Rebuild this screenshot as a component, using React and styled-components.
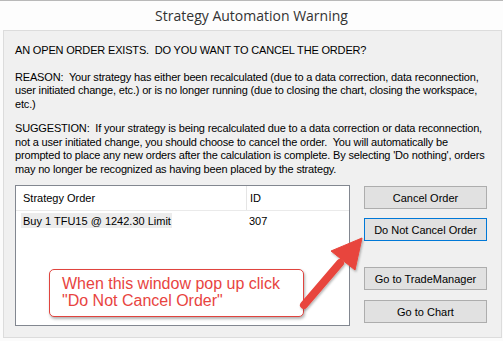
import React from "react";
import styled, { createGlobalStyle } from "styled-components";

const Global = createGlobalStyle`
  html, body { margin: 0; padding: 0; background: #ffffff; }
  body { width: 503px; height: 341px; overflow: hidden; }
  #root { position: relative; width: 503px; height: 341px; }
`;

const Window = styled.div`
  position: relative;
  width: 503px;
  height: 341px;
  box-sizing: border-box;
  border-top: 1px solid #b9b9b9;
  background: #fbfbfb;
  display: flex;
  flex-direction: column;
`;

const TitleBar = styled.div`
  height: 29px;
  display: flex;
  align-items: center;
  justify-content: center;
  font-family: "Open Sans", "Noto Sans", sans-serif;
  font-size: 14px;
  color: #333333;
  background: #fdfdfd;
`;

const Panel = styled.div`
  margin: 0 1px 3px 3px;
  flex: 1;
  background: #f0f0f0;
  border: 1px solid #dcdcdc;
  padding: 13px 13px 11px 11px;
  display: flex;
  flex-direction: column;
  font-family: "Liberation Sans", Arial, sans-serif;
  font-size: 11px;
  letter-spacing: -0.17px;
  color: #000;
`;

const Para = styled.div`
  margin: 0 0 ${(p) => p.$gap || 0}px 0;
  line-height: 13.5px;
`;

const Line = styled.div`
  white-space: pre;
`;

const Bottom = styled.div`
  display: grid;
  grid-template-columns: 335px 123px;
  column-gap: 14px;
  margin-top: auto;
  letter-spacing: 0;
`;

const List = styled.div`
  height: 141px;
  box-sizing: border-box;
  background: #ffffff;
  border: 1px solid #828790;
  display: flex;
  flex-direction: column;
`;

const HeaderRow = styled.div`
  display: grid;
  grid-template-columns: 231px 1fr;
  height: 24px;
  border-bottom: 1px solid #eaeaea;
`;

const HeaderCell = styled.div`
  display: flex;
  align-items: center;
  padding-left: ${(p) => p.$pad}px;
  border-right: ${(p) => (p.$divider ? "1px solid #e5e5e5" : "none")};
`;

const DataRow = styled.div`
  display: grid;
  grid-template-columns: 231px 1fr;
  margin-top: 2px;
  height: 15px;
`;

const DataCell = styled.div`
  display: flex;
  align-items: center;
`;

const Selected = styled.span`
  display: inline-flex;
  align-items: center;
  white-space: nowrap;
  box-sizing: border-box;
  height: 15px;
  margin-left: 5px;
  padding: 0 2px;
  width: 151px;
  background: #ececec;
`;

const IdText = styled.span`
  padding-left: 2px;
`;

const Buttons = styled.div`
  display: flex;
  flex-direction: column;
  padding-top: 1px;
`;

const Button = styled.button`
  width: 123px;
  height: 23px;
  margin-top: ${(p) => p.$mt || 0}px;
  box-sizing: border-box;
  background: #e1e1e1;
  border: 1px solid ${(p) => (p.$focus ? "#0078d7" : "#adadad")};
  font-family: "Liberation Sans", Arial, sans-serif;
  font-size: 11px;
  color: #000;
  padding: 0;
  display: flex;
  align-items: center;
  justify-content: center;
`;

const Callout = styled.div`
  position: absolute;
  left: 49px;
  top: 268px;
  width: 255px;
  height: 48px;
  box-sizing: border-box;
  background: #ffffff;
  border: 1.5px solid #e0443e;
  border-radius: 5px;
  box-shadow: 1px 2px 3px rgba(0, 0, 0, 0.3);
  padding: 5px 0 0 12px;
  font-family: "Liberation Sans", Arial, sans-serif;
  font-size: 16px;
  line-height: 17px;
  color: #e8443f;
`;

const Overlay = styled.svg`
  position: absolute;
  left: 0;
  top: 0;
  pointer-events: none;
`;

const reason = [
  "REASON:  Your strategy has either been recalculated (due to a data correction, data reconnection,",
  "user initiated change, etc.) or is no longer running (due to closing the chart, closing the workspace,",
  "etc.)",
];

const suggestion = [
  "SUGGESTION:  If your strategy is being recalculated due to a data correction or data reconnection,",
  "not a user initiated change, you should choose to cancel the order.  You will automatically be",
  "prompted to place any new orders after the calculation is complete. By selecting 'Do nothing', orders",
  "may no longer be recognized as having been placed by the strategy.",
];

export default function App() {
  return (
    <>
      <Global />
      <Window>
        <TitleBar>Strategy Automation Warning</TitleBar>
        <Panel>
          <Para $gap={13}>
            <Line>AN OPEN ORDER EXISTS.  DO YOU WANT TO CANCEL THE ORDER?</Line>
          </Para>
          <Para $gap={11}>
            {reason.map((l, i) => (
              <Line key={i}>{l}</Line>
            ))}
          </Para>
          <Para>
            {suggestion.map((l, i) => (
              <Line key={i}>{l}</Line>
            ))}
          </Para>
          <Bottom>
            <List>
              <HeaderRow>
                <HeaderCell $pad={7} $divider>Strategy Order</HeaderCell>
                <HeaderCell $pad={3}>ID</HeaderCell>
              </HeaderRow>
              <DataRow>
                <DataCell>
                  <Selected>Buy 1 TFU15 @ 1242.30 Limit</Selected>
                </DataCell>
                <DataCell>
                  <IdText>307</IdText>
                </DataCell>
              </DataRow>
            </List>
            <Buttons>
              <Button>Cancel Order</Button>
              <Button $mt={9} $focus>Do Not Cancel Order</Button>
              <Button $mt={26}>Go to TradeManager</Button>
              <Button $mt={10}>Go to Chart</Button>
            </Buttons>
          </Bottom>
        </Panel>
        <Callout>
          When this window pop up click
          <br />
          "Do Not Cancel Order"
        </Callout>
        <Overlay width="503" height="341" viewBox="0 0 503 341">
          <defs>
            <filter id="sh" x="-20%" y="-20%" width="140%" height="140%">
              <feDropShadow dx="1" dy="1.5" stdDeviation="1.2" floodColor="#000" floodOpacity="0.3" />
            </filter>
          </defs>
          <g filter="url(#sh)" fill="#e8453c" stroke="#e8453c">
            <line x1="304" y1="304" x2="340" y2="262" strokeWidth="8" strokeLinecap="round" />
            <polygon points="362,237 331,250 355,269" strokeWidth="1" strokeLinejoin="round" />
          </g>
        </Overlay>
      </Window>
    </>
  );
}
